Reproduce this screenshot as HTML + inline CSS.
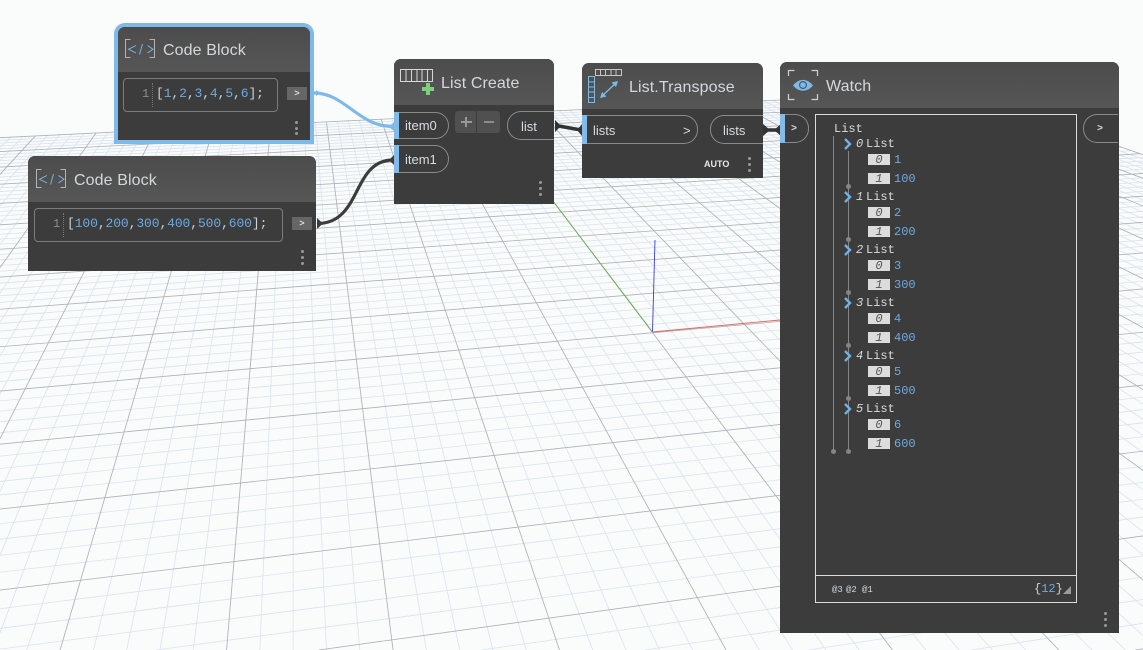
<!DOCTYPE html>
<html><head><meta charset="utf-8"><style>
html,body{margin:0;padding:0;width:1143px;height:650px;overflow:hidden}
body{position:relative;background:#fafbfb;font-family:"Liberation Sans",sans-serif}
svg{position:absolute;left:0;top:0;overflow:hidden}
.n{position:absolute;background:#3c3c3c;border-radius:7px 7px 0 0}
.h{position:absolute;left:0;right:0;top:0;background:linear-gradient(#4c4c4c,#565656);border-radius:7px 7px 0 0}
.t{position:absolute;white-space:nowrap;line-height:20px;height:20px;font-size:16px;color:#d4d8dc;letter-spacing:.1px}
.p{position:absolute;white-space:nowrap;font-size:13px;color:#d8dde2;line-height:16px}
.m{font-family:"Liberation Mono",monospace}
.box{position:absolute;border:1px solid #7c7c7c;border-radius:4px;box-sizing:border-box}
.code{position:absolute;white-space:pre;font-family:"Liberation Mono",monospace;font-size:13px;line-height:16px;color:#c9d3dc}
.code b{font-weight:normal;color:#6fa9df}
.ln{position:absolute;font-family:"Liberation Mono",monospace;font-size:12px;line-height:16px;color:#8f8f8f}
.dl{position:absolute;width:0;border-left:1px dotted #777}
.btn{position:absolute;background:#666;width:20px;height:13px;color:#ddd;font:bold 9px/14px "Liberation Mono",monospace;text-align:center}
.d{position:absolute;width:3px;height:3px;border-radius:50%;background:#999}
.bar{position:absolute;background:#82bbea;width:5px}
.pl{position:absolute;box-sizing:border-box;border:1px solid #8a8a8a;border-left:none;border-radius:0 14px 14px 0}
.pr{position:absolute;box-sizing:border-box;border:1px solid #8a8a8a;border-right:none;border-radius:14px 0 0 14px}
.g{position:absolute;left:0;top:0;width:262px;height:60px}
.lst{position:absolute;font:12px/14px "Liberation Mono",monospace;color:#dcdcdc;white-space:nowrap}
.i0{position:absolute;font:italic 12px/14px "Liberation Mono",monospace;color:#d8d8d8}
.ix{position:absolute;left:52px;width:22px;height:11px;background:#dcdcdc;color:#555;font:italic 12px/12px "Liberation Mono",monospace;text-align:center}
.v{position:absolute;left:78px;font:12px/14px "Liberation Mono",monospace;color:#6fa9df}
.vl{position:absolute;width:1px;background:#858585}
.dot{position:absolute;width:5px;height:5px;border-radius:50%;background:#858585}
</style></head><body>
<svg id="grid" width="1143" height="650" viewBox="0 0 1143 650"></svg>
<svg width="1143" height="650" viewBox="0 0 1143 650" fill="none">
<path d="M652.5 332L780 320" stroke="#e8625c" stroke-width="0.9"/>
<path d="M652.5 332L655 240" stroke="#3d3dd8" stroke-width="0.9"/>
<path d="M652.5 332L540 184" stroke="#6aa84f" stroke-width="0.9"/>
<path d="M314 93C345 93 358 126 392 126.500" stroke="#7fb9e8" stroke-width="3.200"/>
<path d="M316 90L320 92.500L316 96Z" fill="#7fb9e8"/><path d="M394 122L389 127L394 131Z" fill="#7fb9e8"/>
<path d="M318 223.500C362 223 352 160 393 160" stroke="#3c3c3c" stroke-width="3.200"/>
<path d="M317 218L323 223.500L317 229Z" fill="#3c3c3c"/><path d="M394 155L389 160L394 165Z" fill="#3c3c3c"/>
<path d="M556 125.500L581 130" stroke="#333" stroke-width="3.500"/>
<path d="M555 120L561 126L555 132Z" fill="#333"/><path d="M582 124L577 130L582 136Z" fill="#333"/>
<path d="M764 130L780 130" stroke="#333" stroke-width="3.500"/>
<path d="M763 124L770 130L763 136Z" fill="#333"/><path d="M781 124L774 130L781 136Z" fill="#333"/>
</svg>

<!-- Code Block 1 -->
<div style="position:absolute;left:114px;top:23px;width:200px;height:121px;background:#7fb9e8;border-radius:11px 11px 0 0"></div>
<div class="n" style="left:118px;top:27px;width:192px;height:113px">
<div class="h" style="height:45px"></div>
<div class="t" style="left:45px;top:14px">Code Block</div>
<div class="box" style="left:5px;top:51px;width:155px;height:34px"></div>
<div class="ln" style="left:24px;top:59px">1</div>
<div class="dl" style="left:34px;top:56px;height:24px"></div>
<div class="code" style="left:38px;top:59px;letter-spacing:-.1px">[<b>1</b>,<b>2</b>,<b>3</b>,<b>4</b>,<b>5</b>,<b>6</b>];</div>
<div class="btn" style="left:169px;top:60px">&gt;</div>
<div class="d" style="left:177px;top:94px"></div><div class="d" style="left:177px;top:100px"></div><div class="d" style="left:177px;top:105px"></div>
</div>

<!-- Code Block 2 -->
<div class="n" style="left:28px;top:156px;width:288px;height:115px">
<div class="h" style="height:46px"></div>
<div class="t" style="left:46px;top:15px">Code Block</div>
<div class="box" style="left:6px;top:52px;width:249px;height:34px"></div>
<div class="ln" style="left:25px;top:60px">1</div>
<div class="dl" style="left:35px;top:57px;height:24px"></div>
<div class="code" style="left:39px;top:60px;letter-spacing:-.1px">[<b>100</b>,<b>200</b>,<b>300</b>,<b>400</b>,<b>500</b>,<b>600</b>];</div>
<div class="btn" style="left:264px;top:61px">&gt;</div>
<div class="d" style="left:273px;top:94px"></div><div class="d" style="left:273px;top:100px"></div><div class="d" style="left:273px;top:106px"></div>
</div>

<!-- List Create -->
<div class="n" style="left:394px;top:59px;width:160px;height:145px">
<div class="h" style="height:46px"></div>
<div class="t" style="left:47px;top:15px">List Create</div>
<div class="bar" style="left:0;top:53px;height:27px"></div>
<div class="pl" style="left:5px;top:53px;width:50px;height:27px"></div>
<div class="p" style="left:11px;top:59px">item0</div>
<div class="bar" style="left:0;top:86px;height:28px"></div>
<div class="pl" style="left:5px;top:86px;width:50px;height:28px"></div>
<div class="p" style="left:11px;top:93px">item1</div>
<div style="position:absolute;left:61px;top:52px;width:21px;height:22px;background:#505050;border-radius:3px 0 0 3px"></div>
<div style="position:absolute;left:83px;top:52px;width:23px;height:22px;background:#505050;border-radius:0 3px 3px 0"></div>
<div style="position:absolute;left:67px;top:62px;width:11px;height:2px;background:#989898"></div>
<div style="position:absolute;left:71px;top:58px;width:2px;height:10px;background:#989898"></div>
<div style="position:absolute;left:90px;top:62px;width:10px;height:2px;background:#8c8c8c"></div>
<div class="pr" style="left:113px;top:52px;width:47px;height:29px"></div>
<div class="p" style="left:127px;top:60px">list</div>
<div class="d" style="left:145px;top:122px"></div><div class="d" style="left:145px;top:128px"></div><div class="d" style="left:145px;top:134px"></div>
</div>

<!-- List Transpose -->
<div class="n" style="left:582px;top:63px;width:181px;height:115px">
<div class="h" style="height:46px"></div>
<div class="t" style="left:47px;top:15px">List.Transpose</div>
<div class="bar" style="left:0;top:52px;height:29px"></div>
<div class="pl" style="left:5px;top:52px;width:111px;height:29px"></div>
<div class="p" style="left:11px;top:60px">lists</div>
<div class="p" style="left:101px;top:60px">&gt;</div>
<div class="pr" style="left:128px;top:52px;width:53px;height:29px"></div>
<div class="p" style="left:141px;top:60px">lists</div>
<div class="p" style="left:122px;top:93px;font-size:9px;font-weight:bold;color:#e8e8e8">AUTO</div>
<div class="d" style="left:166px;top:94px"></div><div class="d" style="left:166px;top:100px"></div><div class="d" style="left:166px;top:106px"></div>
</div>

<!-- Watch -->
<div class="n" style="left:780px;top:62px;width:339px;height:571px">
<div class="h" style="height:46px"></div>
<div class="t" style="left:46px;top:15px">Watch</div>
<div class="bar" style="left:0;top:52px;height:29px"></div>
<div class="pl" style="left:5px;top:52px;width:24px;height:29px"></div>
<div class="p m" style="left:11px;top:60px;font-size:10px;font-weight:bold">&gt;</div>
<div class="pr" style="left:303px;top:52px;width:35px;height:29px"></div>
<div class="p m" style="left:317px;top:60px;font-size:10px;font-weight:bold">&gt;</div>
<div style="position:absolute;left:35px;top:52px;width:262px;height:489px;box-sizing:border-box;border:1px solid #dcdcdc">
 <div style="position:absolute;left:0;right:0;top:460px;height:1px;background:#dcdcdc"></div>
 <div class="lst" style="left:18px;top:7px">List</div>
 <div class="vl" style="left:17px;top:21px;height:314px"></div>
 <div class="dot" style="left:15px;top:334px"></div>
 <div class="vl" style="left:32px;top:36px;height:298px"></div>
 <div class="dot" style="left:30px;top:334px"></div>

 <div class="g" style="top:22px">
  <svg width="12" height="14" viewBox="0 0 12 14" style="left:27px;top:0" fill="none"><path d="M2 2L7 7L2 12" stroke="#6fb0e6" stroke-width="2.400"/></svg>
  <div class="i0" style="left:40px;top:0">0</div><div class="lst" style="left:50px;top:0">List</div>
  <div class="ix" style="top:17px">0</div><div class="v" style="top:16px">1</div>
  <div class="ix" style="top:36px">1</div><div class="v" style="top:35px">100</div>
  <div class="dot" style="left:30px;top:47px"></div>
 </div>
 <div class="g" style="top:75px">
  <svg width="12" height="14" viewBox="0 0 12 14" style="left:27px;top:0" fill="none"><path d="M2 2L7 7L2 12" stroke="#6fb0e6" stroke-width="2.400"/></svg>
  <div class="i0" style="left:40px;top:0">1</div><div class="lst" style="left:50px;top:0">List</div>
  <div class="ix" style="top:17px">0</div><div class="v" style="top:16px">2</div>
  <div class="ix" style="top:36px">1</div><div class="v" style="top:35px">200</div>
  <div class="dot" style="left:30px;top:47px"></div>
 </div>
 <div class="g" style="top:128px">
  <svg width="12" height="14" viewBox="0 0 12 14" style="left:27px;top:0" fill="none"><path d="M2 2L7 7L2 12" stroke="#6fb0e6" stroke-width="2.400"/></svg>
  <div class="i0" style="left:40px;top:0">2</div><div class="lst" style="left:50px;top:0">List</div>
  <div class="ix" style="top:17px">0</div><div class="v" style="top:16px">3</div>
  <div class="ix" style="top:36px">1</div><div class="v" style="top:35px">300</div>
  <div class="dot" style="left:30px;top:47px"></div>
 </div>
 <div class="g" style="top:181px">
  <svg width="12" height="14" viewBox="0 0 12 14" style="left:27px;top:0" fill="none"><path d="M2 2L7 7L2 12" stroke="#6fb0e6" stroke-width="2.400"/></svg>
  <div class="i0" style="left:40px;top:0">3</div><div class="lst" style="left:50px;top:0">List</div>
  <div class="ix" style="top:17px">0</div><div class="v" style="top:16px">4</div>
  <div class="ix" style="top:36px">1</div><div class="v" style="top:35px">400</div>
  <div class="dot" style="left:30px;top:47px"></div>
 </div>
 <div class="g" style="top:234px">
  <svg width="12" height="14" viewBox="0 0 12 14" style="left:27px;top:0" fill="none"><path d="M2 2L7 7L2 12" stroke="#6fb0e6" stroke-width="2.400"/></svg>
  <div class="i0" style="left:40px;top:0">4</div><div class="lst" style="left:50px;top:0">List</div>
  <div class="ix" style="top:17px">0</div><div class="v" style="top:16px">5</div>
  <div class="ix" style="top:36px">1</div><div class="v" style="top:35px">500</div>
  <div class="dot" style="left:30px;top:47px"></div>
 </div>
 <div class="g" style="top:287px">
  <svg width="12" height="14" viewBox="0 0 12 14" style="left:27px;top:0" fill="none"><path d="M2 2L7 7L2 12" stroke="#6fb0e6" stroke-width="2.400"/></svg>
  <div class="i0" style="left:40px;top:0">5</div><div class="lst" style="left:50px;top:0">List</div>
  <div class="ix" style="top:17px">0</div><div class="v" style="top:16px">6</div>
  <div class="ix" style="top:36px">1</div><div class="v" style="top:35px">600</div>
 </div>

 <div class="lst" style="left:16px;top:468px;font-size:9px;color:#cfd6dc">@3</div>
 <div class="lst" style="left:30px;top:468px;font-size:9px;color:#cfd6dc">@2</div>
 <div class="lst" style="left:46px;top:468px;font-size:9px;color:#cfd6dc">@1</div>
 <div class="lst" style="left:218px;top:467px;font-size:12px;color:#c9d3dc">{<span style="color:#6fa9df">12</span>}</div>
 <svg width="10" height="10" viewBox="0 0 10 10" style="left:247px;top:471px"><path d="M8 0V8H0Z" fill="#9a9a9a"/></svg>
</div>
<div class="d" style="left:324px;top:550px"></div><div class="d" style="left:324px;top:556px"></div><div class="d" style="left:324px;top:562px"></div>
</div>

<!-- Icons -->
<svg width="1143" height="650" viewBox="0 0 1143 650" fill="none">
<g>
<path d="M130.500 39.500H125.500V57.500H130.500M149.500 39.500H154.500V57.500H149.500" stroke="#b4b4b4" stroke-width="1"/>
<path d="M136 45.500L128.500 49.300L136 53M147.500 45.500L153 49.300L147.500 53M142.500 44L139.500 54.500" stroke="#7fb9e8" stroke-width="0.900"/>
</g>
<g>
<path d="M41.500 169.500H36.500V187.500H41.500M60.500 169.500H65.500V187.500H60.500" stroke="#b4b4b4" stroke-width="1"/>
<path d="M47 175.500L39.500 179.300L47 183M58.500 175.500L64 179.300L58.500 183M53.500 174L50.500 184.500" stroke="#7fb9e8" stroke-width="0.900"/>
</g>
<path d="M400.500 69.500H432.500V81.500H400.500ZM406 69.500V81.500M411.500 69.500V81.500M417 69.500V81.500M422 69.500V81.500M427.500 69.500V81.500" stroke="#d8d8d8" stroke-width="1"/>
<path d="M422 89H434M428 83V95" stroke="#7dcf7d" stroke-width="4"/>
<path d="M595.500 69.500H621.500V75.500H595.500ZM600.500 69.500V75.500M605.500 69.500V75.500M611 69.500V75.500M616 69.500V75.500" stroke="#c8c8c8" stroke-width="1"/>
<path d="M588.500 76.500H594.500V102.500H588.500ZM588.500 82H594.500M588.500 87H594.500M588.500 92H594.500M588.500 97.500H594.500" stroke="#7fb9e8" stroke-width="1"/>
<path d="M601 97L617 82" stroke="#7fb9e8" stroke-width="1.300"/>
<path d="M618 81L611.500 82.500L616 87ZM600 98L606.500 96.500L602 92Z" fill="#7fb9e8"/>
<path d="M788.500 76V70.500H794.500M811.500 70.500H817.500V76M788.500 94V99.500H794.500M811.500 99.500H817.500V94" stroke="#d0d0d0" stroke-width="1.200"/>
<path d="M793 85.500C799 78 807 78 813 85.500C807 92.500 799 92.500 793 85.500Z" fill="#7fb9e8"/>
<circle cx="803" cy="85" r="3.400" stroke="#4b5a66" stroke-width="1.200" fill="#7fb9e8"/>
</svg>

<script>
(function(){
var V1=[6170,-160],V2=[293,-143];
var s=document.getElementById('grid'),NS='http://www.w3.org/2000/svg';
function lineN(n){return [[V2[0],V2[1]],[605.2+17.34*n,270]];}
function lineM(k){var m=k/5;var y=-142+1/(0.001876+0.000170*m);return [[0,y],[V1[0],V1[1]]];}
function inter(a,b){
 var x1=a[0][0],y1=a[0][1],x2=a[1][0],y2=a[1][1],x3=b[0][0],y3=b[0][1],x4=b[1][0],y4=b[1][1];
 var d=(x1-x2)*(y3-y4)-(y1-y2)*(x3-x4);
 var p=x1*y2-y1*x2,q=x3*y4-y3*x4;
 return [(p*(x3-x4)-(x1-x2)*q)/d,(p*(y3-y4)-(y1-y2)*q)/d];
}
function clip(a,b){
 var t0=0,t1=1,dx=b[0]-a[0],dy=b[1]-a[1];
 var P=[-dx,dx,-dy,dy],Q=[a[0],1143-a[0],a[1],650-a[1]];
 for(var i=0;i<4;i++){
  if(P[i]===0){if(Q[i]<0)return null;continue;}
  var r=Q[i]/P[i];
  if(P[i]<0){if(r>t1)return null;if(r>t0)t0=r;}
  else{if(r<t0)return null;if(r<t1)t1=r;}
 }
 return [[a[0]+t0*dx,a[1]+t0*dy],[a[0]+t1*dx,a[1]+t1*dy]];
}
function add(a,b,maj){
 var c=clip(a,b);if(!c)return;
 var l=document.createElementNS(NS,'line');
 l.setAttribute('x1',c[0][0].toFixed(2));l.setAttribute('y1',c[0][1].toFixed(2));
 l.setAttribute('x2',c[1][0].toFixed(2));l.setAttribute('y2',c[1][1].toFixed(2));
 l.setAttribute('stroke',maj?'#adb2b8':'#d9e3ee');
 l.setAttribute('stroke-width',maj?'0.85':'0.8');
 if(maj)s.appendChild(l);else s.insertBefore(l,s.firstChild);
}
var far=lineM(50),right=lineN(50),left=lineN(-50);
for(var n=-50;n<=50;n++){
 var L=lineN(n),a=inter(L,far);
 var t=(800-V2[1])/(270-V2[1]);
 var b=[V2[0]+(L[1][0]-V2[0])*t,800];
 add(a,b,n%5===0);
}
for(var k=-45;k<=50;k++){
 var L2=lineM(k);
 var a2=inter(L2,left),b2=inter(L2,right);
 add(a2,b2,k%5===0);
}
})();
</script>
</body></html>
